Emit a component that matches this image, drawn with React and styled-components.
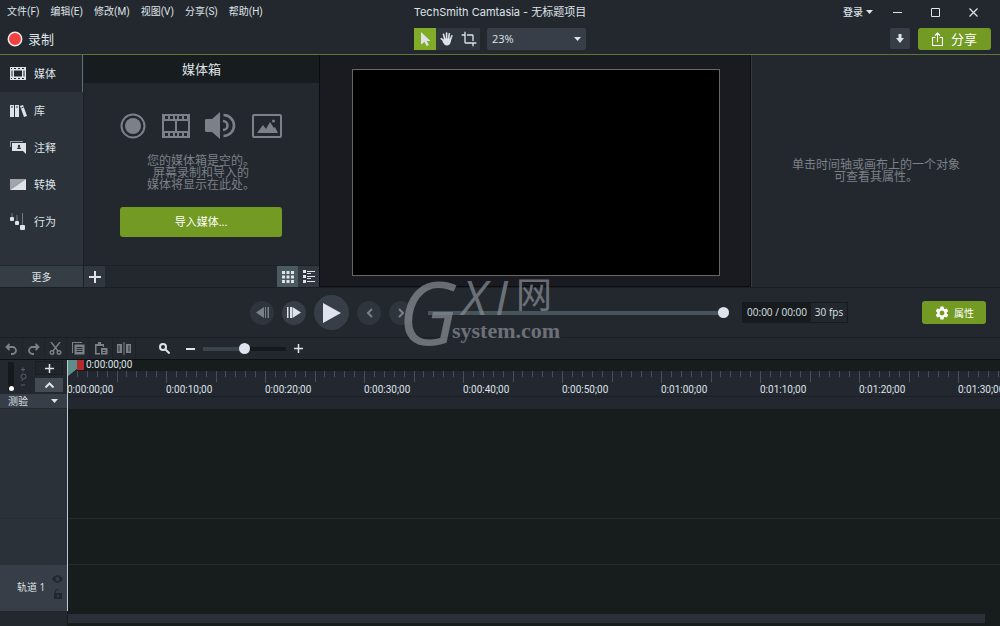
import React, { useState } from "react";
import styled, { createGlobalStyle } from "styled-components";
import { MdCrop, MdSettings } from "react-icons/md";

const MENUS = ["文件(F)", "编辑(E)", "修改(M)", "视图(V)", "分享(S)", "帮助(H)"];

const Svg = ({ w = 16, h = 16, children, ...rest }) => (
  <svg
    width={w}
    height={h}
    viewBox={`0 0 ${w} ${h}`}
    fill="currentColor"
    aria-hidden="true"
    {...rest}
  >
    {children}
  </svg>
);

const Caret = () => (
  <Svg w={7} h={4}>
    <path d="M0 0h7L3.5 4z" />
  </Svg>
);

const FilmSmall = () => (
  <Svg w={16} h={13}>
    <path
      fillRule="evenodd"
      d="M0 0h16v13H0zM1 1v1h1V1zM4 1v1h2V1zM8 1v1h2V1zM12 1v1h2V1zM1 11v1h1v-1zM4 11v1h2v-1zM8 11v1h2v-1zM12 11v1h2v-1zM1.500 3.500v6h1v-6zM4 3.500v6h8v-6zM13.500 3.500v6h1v-6z"
    />
  </Svg>
);

const Books = () => (
  <Svg w={17} h={13}>
    <path d="M0 1h4v12H0zM5 1h4v12H5zM10 2l3-1 4 11-3 1z" />
    <path d="M1 3h2M6 3h2M11.500 4l2-.7" stroke="#2b3239" />
  </Svg>
);

const Note = () => (
  <Svg w={17} h={13}>
    <path d="M0 6V0h13v1H1v5z" opacity=".6" />
    <path d="M2 2h14v11l-3-3H2z" />
    <circle cx="9" cy="5" r="1.200" fill="#2b3239" />
    <path d="M7 8c0-2.500 4-2.500 4 0z" fill="#2b3239" />
  </Svg>
);

const Transition = () => (
  <Svg w={16} h={11}>
    <path d="M0 0h16L0 11z" opacity=".65" />
    <path d="M16 0v11H0z" />
  </Svg>
);

const Behavior = () => (
  <Svg w={16} h={17}>
    <path d="M2 0v4M7 2v7M12.500 0v12" stroke="currentColor" opacity=".4" />
    <rect x="0" y="4" width="4" height="4" rx="1" />
    <rect x="5" y="8" width="4" height="4" rx="1" />
    <rect x="10" y="12" width="5" height="5" rx="1" />
  </Svg>
);

const TABS = [
  { label: "媒体", icon: <FilmSmall /> },
  { label: "库", icon: <Books /> },
  { label: "注释", icon: <Note /> },
  { label: "转换", icon: <Transition /> },
  { label: "行为", icon: <Behavior /> },
];

const RULER = Array.from({ length: 10 }, (_, i) => {
  const s = i * 10;
  return `0:0${Math.floor(s / 60)}:${String(s % 60).padStart(2, "0")};00`;
});

const EDIT_TOOLS = [
  {
    label: "撤销",
    icon: (
      <Svg w={13} h={12} fill="none" stroke="currentColor" strokeWidth="1.8">
        <path d="M4.500 1L1.500 4l3 3M2 4h5.500a3.500 3.500 0 0 1 0 7H6" />
      </Svg>
    ),
  },
  {
    label: "重做",
    icon: (
      <Svg w={13} h={12} fill="none" stroke="currentColor" strokeWidth="1.8">
        <path d="M8.500 1l3 3-3 3M11 4H5.500a3.500 3.500 0 0 0 0 7H7" />
      </Svg>
    ),
  },
  {
    label: "剪切",
    icon: (
      <Svg w={13} h={13} fill="none" stroke="currentColor" strokeWidth="1.4">
        <path d="M2 0l7 9M11 0L4 9" />
        <circle cx="3" cy="10.500" r="1.800" />
        <circle cx="10" cy="10.500" r="1.800" />
      </Svg>
    ),
  },
  {
    label: "复制",
    icon: (
      <Svg w={13} h={13}>
        <path d="M0 11V0h10v1H1v10z" />
        <path
          fillRule="evenodd"
          d="M2.500 2.500h10v10h-10zM4.500 5v1h6V5zM4.500 7v1h6V7zM4.500 9v1h6V9z"
        />
      </Svg>
    ),
  },
  {
    label: "粘贴",
    icon: (
      <Svg w={13} h={13}>
        <path d="M0 2h3V0h3v2h3v3H8V4H1.500v7H5v1.500H0z" />
        <path fillRule="evenodd" d="M6 6h6.500v6.500H6zM7.500 8v1h3V8zM7.500 10v1h3v-1z" />
      </Svg>
    ),
  },
  {
    label: "拆分",
    icon: (
      <Svg w={14} h={13}>
        <path d="M6.500 0h1v13h-1z" />
        <path fillRule="evenodd" d="M0 2h5v9H0zM1.500 3.500v6h1v-6z" />
        <path fillRule="evenodd" d="M9 2h5v9H9zM11.500 3.500v6h1v-6z" />
      </Svg>
    ),
  },
];

const App = () => {
  const [activeTab, setActiveTab] = useState("媒体");
  const [tool, setTool] = useState("select");

  return (
    <Window>
      <GlobalStyle />
      <TitleBar>
        <Menu>
          {MENUS.map((m) => (
            <MenuItem key={m}>{m}</MenuItem>
          ))}
        </Menu>
        <Title>TechSmith Camtasia - 无标题项目</Title>
        <WindowActions>
          <SignIn>
            登录
            <Caret />
          </SignIn>
          <WindowButton aria-label="最小化">
            <Svg w={9} h={9}>
              <path d="M0 4h9v1H0z" />
            </Svg>
          </WindowButton>
          <WindowButton aria-label="最大化">
            <Svg w={9} h={9} fill="none" stroke="currentColor">
              <path d="M.5.5h8v8h-8z" />
            </Svg>
          </WindowButton>
          <WindowButton aria-label="关闭">
            <Svg w={9} h={9} fill="none" stroke="currentColor" strokeWidth="1.2">
              <path d="M.5.5l8 8M8.500.5l-8 8" />
            </Svg>
          </WindowButton>
        </WindowActions>
      </TitleBar>

      <Toolbar>
        <RecordButton>
          <Svg w={16} h={16}>
            <circle cx="8" cy="8" r="6.700" fill="#f0403f" stroke="#f5e9e9" strokeWidth="1.500" />
          </Svg>
          录制
        </RecordButton>
        <CanvasTools>
          <ToolGroup>
            <ToolButton aria-label="选择" $active={tool === "select"} onClick={() => setTool("select")}>
              <Svg w={11} h={14}>
                <path d="M1 0l9.500 9H6.800l2 4-2.300 1-1.900-4L1 12.500z" />
              </Svg>
            </ToolButton>
            <ToolButton aria-label="平移" $active={tool === "pan"} onClick={() => setTool("pan")}>
              <Svg w={14} h={14}>
                <path
                  d="M4.700 7L3.500 2.300M6.600 7V1.100M8.600 7l.7-5.300M10.300 8l1.600-4.200M4.500 9.500L1.200 6.700"
                  stroke="currentColor"
                  strokeWidth="1.600"
                  strokeLinecap="round"
                />
                <path d="M3.800 6.500h7.300c.2 2.500-.6 7-4 7-2.600 0-3.500-2-4.600-4z" />
              </Svg>
            </ToolButton>
            <ToolButton aria-label="裁剪" $active={tool === "crop"} onClick={() => setTool("crop")}>
              <MdCrop size={16} />
            </ToolButton>
          </ToolGroup>
          <ZoomBox>
            <ZoomSelect aria-label="画布缩放" defaultValue="23%">
              <option>23%</option>
              <option>50%</option>
              <option>100%</option>
            </ZoomSelect>
            <Caret />
          </ZoomBox>
        </CanvasTools>
        <ShareTools>
          <DownloadButton aria-label="下载">
            <Svg w={8} h={9}>
              <path d="M2.500 0h3v4H8L4 9 0 4h2.500z" />
            </Svg>
          </DownloadButton>
          <ShareButton>
            <Svg w={11} h={14} fill="none" stroke="currentColor" strokeWidth="1.100">
              <path d="M3.500 5.500h-3v8h10v-8h-3M5.500 10V1M3 3.500L5.500 1 8 3.500" />
            </Svg>
            分享
          </ShareButton>
        </ShareTools>
      </Toolbar>

      <Workspace>
        <Sidebar>
          {TABS.map(({ label, icon }) => (
            <Tab key={label} $active={label === activeTab} onClick={() => setActiveTab(label)}>
              <TabIcon>{icon}</TabIcon>
              {label}
            </Tab>
          ))}
          <MoreButton>更多</MoreButton>
        </Sidebar>

        <MediaBin>
          <BinHeader>媒体箱</BinHeader>
          <BinBody>
            <BinIcons>
              <Svg w={26} h={26}>
                <circle cx="13" cy="13" r="11.500" fill="none" stroke="currentColor" strokeWidth="2" />
                <circle cx="13" cy="13" r="8" />
              </Svg>
              <Svg w={28} h={24}>
                <path
                  fillRule="evenodd"
                  d="M0 0h28v24H0zM3 2v3h3V2zM8 2v3h3V2zM13 2v3h2V2zM17 2v3h3V2zM22 2v3h3V2zM3 19v3h3v-3zM8 19v3h3v-3zM13 19v3h2v-3zM17 19v3h3v-3zM22 19v3h3v-3zM2 7v10h11V7zM15 7v10h11V7z"
                />
              </Svg>
              <Svg w={31} h={27}>
                <path d="M0 8l1-1h6l8-7v27l-8-7H1l-1-1z" />
                <path
                  d="M18 9a4.500 4.500 0 0 1 0 9M18.500 3a10.500 10.500 0 0 1 0 21"
                  fill="none"
                  stroke="currentColor"
                  strokeWidth="2.600"
                />
              </Svg>
              <Svg w={30} h={24}>
                <rect x="1" y="1" width="28" height="22" rx="1" fill="none" stroke="currentColor" strokeWidth="2" />
                <path d="M5 19l6-8 3 4 4-7 4 6 1-1 3 6z" />
                <circle cx="21.500" cy="7" r="1.500" />
              </Svg>
            </BinIcons>
            <Hint>
              您的媒体箱是空的。
              <br />
              屏幕录制和导入的
              <br />
              媒体将显示在此处。
            </Hint>
            <ImportButton>导入媒体...</ImportButton>
          </BinBody>
          <BinFooter>
            <FooterButton aria-label="添加">
              <Svg w={12} h={12}>
                <path d="M5 0h2v5h5v2H7v5H5V7H0V5h5z" />
              </Svg>
            </FooterButton>
            <ViewButtons>
              <FooterButton aria-label="网格视图" $active>
                <Svg w={12} h={12}>
                  <path d="M0 0h3v3H0zM4.500 0h3v3h-3zM9 0h3v3H9zM0 4.500h3v3H0zM4.500 4.500h3v3h-3zM9 4.500h3v3H9zM0 9h3v3H0zM4.500 9h3v3h-3zM9 9h3v3H9z" />
                </Svg>
              </FooterButton>
              <FooterButton aria-label="列表视图">
                <Svg w={12} h={13}>
                  <path d="M0 0h3v3H0zM0 5h3v3H0zM0 10h3v3H0zM4 1h8v1H4zM4 3h4v1H4zM4 6h8v1H4zM4 8h4v1H4zM4 11h8v1H4z" />
                </Svg>
              </FooterButton>
            </ViewButtons>
          </BinFooter>
        </MediaBin>

        <CanvasArea>
          <Screen />
        </CanvasArea>

        <Properties>
          <Hint>
            单击时间轴或画布上的一个对象
            <br />
            可查看其属性。
          </Hint>
        </Properties>
      </Workspace>

      <Playback>
        <Transport>
          <RoundButton aria-label="上一帧" $dim>
            <Svg w={13} h={11}>
              <path d="M8 0v11L0 5.500zM9 0h1v11H9zM11.500 0H13v11h-1.500z" />
            </Svg>
          </RoundButton>
          <RoundButton aria-label="下一帧">
            <Svg w={14} h={11}>
              <path d="M0 0h1.500v11H0zM3 0h2v11H3zM5.500 0v11L14 5.500z" />
            </Svg>
          </RoundButton>
          <RoundButton aria-label="播放" $large>
            <Svg w={18} h={20}>
              <path d="M0 0v20l18-10z" />
            </Svg>
          </RoundButton>
          <RoundButton aria-label="上一个标记" $dim>
            <Svg w={7} h={10} fill="none" stroke="currentColor" strokeWidth="2">
              <path d="M6 1L2 5l4 4" />
            </Svg>
          </RoundButton>
          <RoundButton aria-label="下一个标记" $dim>
            <Svg w={7} h={10} fill="none" stroke="currentColor" strokeWidth="2">
              <path d="M1 1l4 4-4 4" />
            </Svg>
          </RoundButton>
        </Transport>
        <Scrubber type="range" aria-label="播放位置" defaultValue={100} />
        <TimeBox>
          <Time>00:00 / 00:00</Time>
          <Fps>30 fps</Fps>
        </TimeBox>
        <PropertyButton>
          <MdSettings size={16} />
          属性
        </PropertyButton>
        <Watermark aria-hidden="true">
          <WatermarkInitial>G</WatermarkInitial>
          <WatermarkRest>
            <WatermarkName>
              <i>X</i>
              <i>I</i>
              <span>网</span>
            </WatermarkName>
            <WatermarkSite>system.com</WatermarkSite>
          </WatermarkRest>
        </Watermark>
      </Playback>

      <EditBar>
        {EDIT_TOOLS.map(({ label, icon }) => (
          <EditButton key={label} aria-label={label}>
            {icon}
          </EditButton>
        ))}
        <ZoomTools>
          <Svg w={11} h={11} fill="none" stroke="currentColor" strokeWidth="2">
            <circle cx="4" cy="4" r="3" />
            <path d="M6 6l4.500 4.500" />
          </Svg>
          <ZoomStep aria-label="缩小">
            <Svg w={9} h={9}>
              <path d="M0 4h9v2H0z" />
            </Svg>
          </ZoomStep>
          <ZoomRange type="range" aria-label="时间轴缩放" defaultValue={50} />
          <ZoomStep aria-label="放大">
            <Svg w={9} h={9}>
              <path d="M4 0h1v4h4v1H5v4H4V5H0V4h4z" stroke="currentColor" strokeWidth=".5" />
            </Svg>
          </ZoomStep>
        </ZoomTools>
      </EditBar>

      <Timeline>
        <TrackHeaders>
          <HeaderTools>
            <TrackHeight type="range" aria-label="轨道高度" defaultValue={0} />
            <Svg w={7} h={20} fill="none" stroke="#596068">
              <path d="M1 2.500h4M3 .5v4M1 18h4M1.500 14l1.500-2" />
              <circle cx="3.500" cy="9.500" r="2.500" />
            </Svg>
            <HeaderButtons>
              <SmallButton aria-label="添加轨道">
                <Svg w={9} h={9}>
                  <path d="M4 0h1v4h4v1H5v4H4V5H0V4h4z" stroke="currentColor" strokeWidth=".5" />
                </Svg>
              </SmallButton>
              <SmallButton aria-label="收起" $raised>
                <Svg w={9} h={6} fill="none" stroke="currentColor" strokeWidth="2">
                  <path d="M.5 5.500l4-4 4 4" />
                </Svg>
              </SmallButton>
            </HeaderButtons>
          </HeaderTools>
          <QuizRow>
            测验
            <Caret />
          </QuizRow>
          <EmptyHeader />
          <SpareHeader />
          <TrackHeader>
            轨道 1
            <TrackIcons>
              <Svg w={11} h={8}>
                <path
                  fillRule="evenodd"
                  d="M0 4c3-5 8-5 11 0-3 5-8 5-11 0zM5.500 2a2 2 0 1 0 0 4 2 2 0 0 0 0-4z"
                />
              </Svg>
              <Svg w={8} h={10}>
                <path fillRule="evenodd" d="M1 4V2a2.500 2.500 0 0 1 4-1.500L4 1.500C3 1 2 1.500 2 2.500V4h6v6H0V4zM3 6v2h2V6z" />
              </Svg>
            </TrackIcons>
          </TrackHeader>
        </TrackHeaders>

        <Tracks>
          <TimeStrip>0:00:00;00</TimeStrip>
          <Ruler>
            {RULER.map((label) => (
              <Segment key={label}>
                <Ticks>
                  {Array.from({ length: 10 }, (_, i) => (
                    <Tick key={i} $size={i === 0 ? "full" : i === 5 ? "half" : "small"} />
                  ))}
                </Ticks>
                <span>{label}</span>
              </Segment>
            ))}
          </Ruler>
          <QuizLane />
          <EmptyLane />
          <Lane />
          <Lane />
          <ScrollArea>
            <ScrollThumb />
          </ScrollArea>
          <Playhead>
            <Svg w={16} h={16}>
              <path d="M0 0h9v9l-9 7z" fill="#5d8c8b" />
              <path d="M9 0h7v10H9z" fill="#b22a2b" />
            </Svg>
          </Playhead>
        </Tracks>
      </Timeline>
    </Window>
  );
};

const GlobalStyle = createGlobalStyle`
  * {
    box-sizing: border-box;
  }

  body {
    margin: 0;
    background: #23282f;
    color: #dfe3e8;
    font-family: "Open Sans", "Noto Sans CJK SC", sans-serif;
    font-size: 11px;
    line-height: 14px;
  }

  button,
  select,
  input {
    margin: 0;
    padding: 0;
    border: 0;
    background: none;
    color: inherit;
    font: inherit;
  }

  button {
    display: flex;
    align-items: center;
    justify-content: center;
    white-space: nowrap;
  }

  svg {
    display: block;
    flex: none;
  }
`;

const Window = styled.div`
  display: flex;
  flex-direction: column;
  min-height: 100vh;
  overflow: hidden;
`;

const TitleBar = styled.header`
  display: grid;
  grid-template-columns: 1fr auto 1fr;
  align-items: center;
  height: 24px;
`;

const Menu = styled.nav`
  display: flex;
  gap: 11px;
  padding-left: 7px;
`;

const MenuItem = styled.button`
  font-family: Roboto, "Noto Sans CJK SC", sans-serif;
  font-size: 10px;
`;

const Title = styled.div`
  font-family: Inter, "Noto Sans CJK SC", sans-serif;
  font-size: 11px;
`;

const WindowActions = styled.div`
  display: flex;
  justify-content: flex-end;
  align-items: center;
  padding-right: 8px;
`;

const SignIn = styled.button`
  gap: 3px;
  margin-right: 5px;
  font-size: 10px;
  font-weight: 500;
`;

const WindowButton = styled.button`
  width: 38px;
  height: 24px;
`;

const Toolbar = styled.div`
  display: grid;
  grid-template-columns: 1fr auto 1fr;
  align-items: center;
  height: 31px;
  border-bottom: 1px solid #5f7336;
`;

const RecordButton = styled.button`
  justify-self: start;
  gap: 5px;
  padding-left: 7px;
  font-size: 13px;
`;

const CanvasTools = styled.div`
  display: flex;
  gap: 7px;
`;

const ToolGroup = styled.div`
  display: flex;
`;

const ToolButton = styled.button`
  width: 22px;
  height: 22px;
  background: ${({ $active }) => ($active ? "#80ac28" : "#2f363e")};
`;

const ZoomBox = styled.div`
  display: flex;
  align-items: center;
  width: 99px;
  padding-right: 5px;
  border-radius: 2px;
  background: #373e47;
`;

const ZoomSelect = styled.select`
  flex: 1;
  padding-left: 5px;
  appearance: none;
`;

const ShareTools = styled.div`
  display: flex;
  justify-content: flex-end;
  gap: 8px;
  padding-right: 9px;
`;

const DownloadButton = styled.button`
  width: 20px;
  height: 21px;
  border-radius: 2px;
  background: #373e47;
`;

const GreenButton = styled.button`
  border-radius: 3px;
  background: #739a22;
  color: #fff;
`;

const ShareButton = styled(GreenButton)`
  gap: 8px;
  width: 73px;
  height: 22px;
  font-size: 13px;
`;

const Workspace = styled.main`
  display: grid;
  grid-template-columns: 83px 236px 1fr 249px;
  height: 232px;
`;

const Sidebar = styled.nav`
  display: flex;
  flex-direction: column;
  background: #2b3239;
`;

const Tab = styled.button`
  justify-content: flex-start;
  height: 37px;
  padding-left: 10px;
  gap: 7px;
  border-right: 1px solid ${({ $active }) => ($active ? "#5a7577" : "#2b3239")};
  background: ${({ $active }) => ($active ? "#23282f" : "none")};
`;

const TabIcon = styled.span`
  width: 17px;
`;

const MoreButton = styled.button`
  height: 22px;
  margin-top: auto;
  border-top: 1px solid #20252b;
  background: #353d45;
  font-size: 10px;
`;

const MediaBin = styled.section`
  display: flex;
  flex-direction: column;
  border-left: 1px solid #1c2126;
`;

const BinHeader = styled.h2`
  margin: 0;
  background: #171c1e;
  font-size: 13px;
  font-weight: 400;
  line-height: 28px;
  text-align: center;
`;

const BinBody = styled.div`
  display: flex;
  flex: 1;
  flex-direction: column;
  padding: 29px 37px 0 36px;
`;

const BinIcons = styled.div`
  display: flex;
  align-items: center;
  justify-content: space-between;
  margin-bottom: 16px;
  color: #7c8088;
`;

const Hint = styled.p`
  margin: 0;
  color: #7c8088;
  font-size: 12px;
  line-height: 12px;
  text-align: center;
`;

const ImportButton = styled(GreenButton)`
  height: 30px;
  margin-top: 16px;
`;

const BinFooter = styled.div`
  display: flex;
  justify-content: space-between;
  border-top: 1px solid #1c2126;
`;

const ViewButtons = styled.div`
  display: flex;
`;

const FooterButton = styled.button`
  width: 21px;
  height: 21px;
  background: ${({ $active }) => ($active ? "#4a5a5f" : "#30373e")};
`;

const CanvasArea = styled.section`
  display: flex;
  padding: 14px 30px 10px 32px;
  border: 1px solid #0b0d10;
  border-top: 0;
  background: #191b21;
`;

const Screen = styled.div`
  flex: 1;
  border: 1px solid #67675f;
  background: #000;
`;

const Properties = styled.aside`
  display: flex;
  align-items: center;
  justify-content: center;
  border-left: 1px solid #353a41;
`;

const Playback = styled.section`
  position: relative;
  display: flex;
  align-items: center;
  height: 51px;
  padding: 0 14px 0 250px;
  border-top: 1px solid #1b1f25;
  border-bottom: 1px solid #1b1f25;
`;

const Transport = styled.div`
  display: flex;
  align-items: center;
  gap: 8px;
`;

const RoundButton = styled.button`
  width: ${({ $large }) => ($large ? 35 : 24)}px;
  height: ${({ $large }) => ($large ? 35 : 24)}px;
  border-radius: 50%;
  background: ${({ $dim }) => ($dim ? "#2f353d" : "#373e47")};
  color: ${({ $dim }) => ($dim ? "#7c8188" : "#dfe3ee")};
`;

const Range = styled.input`
  height: 12px;
  appearance: none;

  &::-webkit-slider-runnable-track {
    height: 4px;
    background: #46545b;
  }

  &::-webkit-slider-thumb {
    width: 11px;
    height: 11px;
    margin-top: -4px;
    border-radius: 50%;
    background: #dfe3ee;
    appearance: none;
  }
`;

const Scrubber = styled(Range)`
  flex: 1;
  min-width: 0;
  margin: 0 13px 0 15px;
`;

const TimeBox = styled.div`
  display: flex;
  margin-right: 74px;
  border: 1px solid #171b1e;
  font-size: 10px;
  line-height: 19px;
  text-align: center;
`;

const Time = styled.span`
  width: 68px;
  background: #171b1e;
`;

const Fps = styled.span`
  width: 36px;
`;

const PropertyButton = styled(GreenButton)`
  gap: 4px;
  width: 64px;
  height: 23px;
  font-size: 10px;
`;

/* site stamp lying over the transport bar */
const Watermark = styled.div`
  position: absolute;
  left: 398px;
  top: -15px;
  display: flex;
  color: #85888f;
  opacity: 0.75;
  pointer-events: none;
`;

const WatermarkInitial = styled.i`
  width: 54px;
  font-family: "Open Sans", sans-serif;
  font-size: 88px;
  line-height: 76px;
`;

const WatermarkRest = styled.div`
  padding-top: 2px;
`;

const WatermarkName = styled.div`
  display: flex;
  gap: 8px;
  padding-left: 10px;
  font-family: "Open Sans", "Noto Sans CJK SC", sans-serif;
  font-size: 48px;
  line-height: 44px;

  span {
    font-size: 36px;
    line-height: 40px;
  }
`;

const WatermarkSite = styled.div`
  font-family: "Liberation Serif", serif;
  font-size: 22px;
  font-weight: 700;
  line-height: 24px;
`;

const EditBar = styled.div`
  display: flex;
  align-items: center;
  height: 21px;
  padding-left: 1px;
`;

const EditButton = styled.button`
  width: 22px;
  height: 21px;
  border-right: 1px solid #1e2329;
  color: #7c8188;

  &:nth-child(n + 4) {
    width: 23px;
  }
`;

const ZoomTools = styled.div`
  display: flex;
  align-items: center;
  gap: 8px;
  padding-left: 23px;

  > svg {
    margin-right: 8px;
  }
`;

const ZoomStep = styled.button`
  width: 9px;
  height: 19px;
`;

const ZoomRange = styled(Range)`
  width: 83px;

  &::-webkit-slider-runnable-track {
    background: linear-gradient(90deg, #3a444b 50%, #15191c 50%);
  }
`;

const Timeline = styled.section`
  display: grid;
  flex: 1;
  grid-template-columns: 67px minmax(0, 1fr);
  border-top: 1px solid #0d1012;
`;

const TrackHeaders = styled.div`
  display: flex;
  flex-direction: column;
  padding-bottom: 15px;
`;

const HeaderTools = styled.div`
  display: flex;
  align-items: center;
  height: 34px;
  padding: 0 4px 1px 8px;
  gap: 6px;
`;

const TrackHeight = styled.input`
  width: 6px;
  height: 29px;
  appearance: none;
  writing-mode: vertical-lr;
  direction: rtl;
  background: #15191c;

  &::-webkit-slider-thumb {
    width: 5px;
    height: 5px;
    border-radius: 50%;
    background: #fff;
    appearance: none;
  }
`;

const HeaderButtons = styled.div`
  display: grid;
  gap: 3px;
  margin-left: auto;
`;

const SmallButton = styled.button`
  width: 28px;
  height: 14px;
  border: 1px solid ${({ $raised }) => ($raised ? "#434b54" : "#1a1e23")};
  background: ${({ $raised }) => ($raised ? "#434b54" : "#20252b")};
`;

const QuizRow = styled.div`
  display: flex;
  align-items: center;
  justify-content: space-between;
  height: 14px;
  padding: 0 9px 0 8px;
  background: #373e47;
  font-size: 10px;
`;

const EmptyHeader = styled.div`
  flex: 1;
  border-top: 1px solid #22272d;
  background: #2b3139;
`;

const SpareHeader = styled.div`
  height: 47px;
  border-top: 1px solid #272d34;
  background: #2b3139;
`;

const TrackHeader = styled.div`
  display: flex;
  align-items: center;
  justify-content: space-between;
  height: 46px;
  padding: 0 4px 2px 17px;
  background: #373e47;
  font-size: 10px;
`;

const TrackIcons = styled.div`
  display: grid;
  justify-items: center;
  gap: 6px;
  color: #22272e;
`;

const Tracks = styled.div`
  position: relative;
  display: flex;
  flex-direction: column;
  background: #171c1c;
`;

const TimeStrip = styled.div`
  height: 11px;
  padding-left: 19px;
  font-family: Roboto, sans-serif;
  font-size: 10px;
  line-height: 10px;
`;

const Ruler = styled.div`
  display: flex;
  height: 25px;
  overflow: hidden;
  background: #23272f;
  font-family: Roboto, sans-serif;
  font-size: 10px;
  line-height: 12px;
`;

const Segment = styled.div`
  flex: none;
  width: 99px;
`;

const Ticks = styled.div`
  display: flex;
  height: 13px;
`;

const TICK_HEIGHTS = { full: 12, half: 11, small: 6 };

const Tick = styled.div`
  flex: 1;
  height: ${({ $size }) => TICK_HEIGHTS[$size]}px;
  border-left: 1px solid #4a4f56;
`;

const QuizLane = styled.div`
  height: 13px;
  border-top: 1px solid #1b1f25;
  background: #23272f;
`;

const EmptyLane = styled.div`
  flex: 1;
`;

const Lane = styled.div`
  height: 46px;
  border-top: 1px solid #262b2c;
`;

const ScrollArea = styled.div`
  height: 16px;
  padding: 4px 15px 3px 1px;
`;

const ScrollThumb = styled.div`
  height: 9px;
  background: #2b3038;
`;

const Playhead = styled.div`
  position: absolute;
  top: 0;
  bottom: 15px;
  left: 0;
  border-left: 1px solid #b5cccb;
`;

export default App;
